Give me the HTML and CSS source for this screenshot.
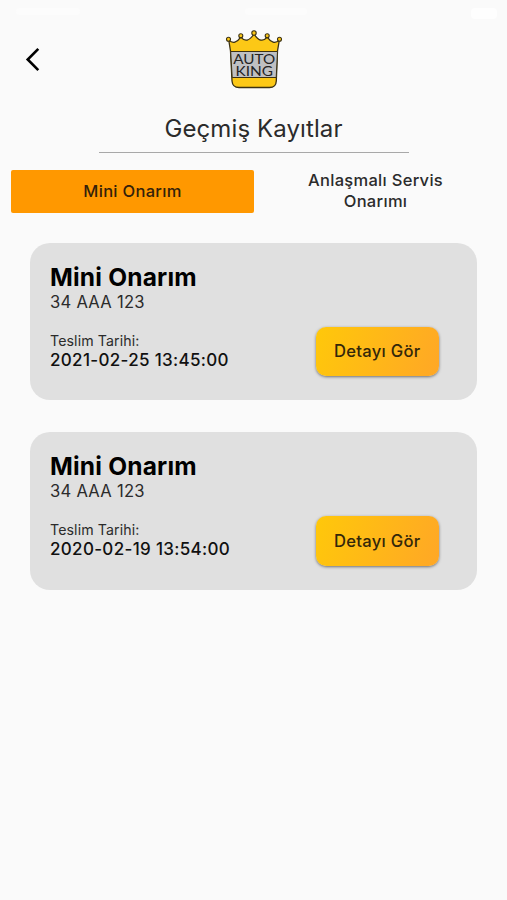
FILE: index.html
```html
<!DOCTYPE html>
<html lang="tr">
<head>
<meta charset="utf-8">
<meta name="viewport" content="width=device-width, initial-scale=1">
<title>Geçmiş Kayıtlar</title>
<link rel="stylesheet" href="styles.css">
</head>
<body>
<div class="status"><span class="status-time"></span><span class="status-notch"></span><span class="status-battery"></span></div>
<header class="topbar">
  <button class="back" aria-label="Geri">
    <svg width="18" height="26" viewBox="0 0 18 26"><path d="M14.300 1.800 3.700 12.500 14.300 23.200" fill="none" stroke="#000" stroke-width="2.6"/></svg>
  </button>
  <svg class="logo" width="80" height="80" viewBox="0 0 80 80">
    <path d="M16.500 31 14.800 20.300Q21 25.500 26.800 17.200Q33 24.500 40 14Q47 24.500 53.200 17.200Q59 25.500 65.300 20.300L63.500 31L62.300 61Q62 67.500 55.500 67.500H25Q18.500 67.500 18 61Z" fill="#fcc816" stroke="#3b3113" stroke-width="1.300"/>
    <path d="M16.700 31.500H63.500L62.200 57.500H18.200Z" fill="#bfc0c2" stroke="#3b3113" stroke-width="1"/>
    <g fill="#fcc816" stroke="#3b3113" stroke-width="1.100"><circle cx="14.500" cy="19.300" r="2"/><circle cx="26.800" cy="15.800" r="2"/><circle cx="40" cy="13" r="2.200"/><circle cx="53.200" cy="15.800" r="2"/><circle cx="65.500" cy="19.300" r="2"/></g>
    <g class="logo-text"><text x="19.300" y="43.900" textLength="42" lengthAdjust="spacingAndGlyphs">AUTO</text><text x="21.500" y="55.800" textLength="37.500" lengthAdjust="spacingAndGlyphs">KING</text></g>
  </svg>
</header>
<h1 class="title"><span>Geçmiş Kayıtlar</span></h1>
<nav class="tabs">
  <button class="tab active">Mini Onarım</button>
  <button class="tab">Anlaşmalı Servis<br>Onarımı</button>
</nav>
<main class="records">
  <article class="card">
    <div class="info">
      <h2 class="name">Mini Onarım</h2>
      <p class="plate">34 AAA 123</p>
      <p class="label">Teslim Tarihi:</p>
      <p class="date">2021-02-25 13:45:00</p>
    </div>
    <button class="detail">Detayı Gör</button>
  </article>
  <article class="card">
    <div class="info">
      <h2 class="name">Mini Onarım</h2>
      <p class="plate">34 AAA 123</p>
      <p class="label">Teslim Tarihi:</p>
      <p class="date">2020-02-19 13:54:00</p>
    </div>
    <button class="detail">Detayı Gör</button>
  </article>
</main>
</body>
</html>
```
FILE: styles.css
```css
* { box-sizing: border-box; margin: 0; padding: 0; }
body { width: 507px; height: 900px; overflow: hidden; background: #fafafa; color: #2b2b2b; font-family: Inter, "Liberation Sans", sans-serif; }
button { border: 0; background: none; font: inherit; color: inherit; }
.status { height: 20px; padding: 8px 10px 0 16px; display: flex; justify-content: space-between; }
.status span { background: #fcfcfc; border-radius: 4px; }
.status-time { width: 64px; height: 7px; }
.status-notch { width: 62px; height: 7px; }
.status .status-battery { width: 26px; height: 11px; background: #fefefe; }
.topbar { height: 80px; display: grid; grid-template-columns: 214px 80px 1fr; }
.back { width: 26px; height: 26px; margin: 27px 0 0 24px; display: flex; }
.logo-text { font-family: Lato, sans-serif; font-size: 14px; fill: #242424; }
.title { width: 310px; height: 53px; margin: 0 auto; padding-top: 14px; border-bottom: 1.5px solid #a8a8a8; text-align: center; font-size: 24px; line-height: 30px; font-weight: 400; letter-spacing: .1px; }
.tabs { display: grid; grid-template-columns: 243px 243px; height: 43.5px; margin: 16.5px 0 0 11px; }
.tab { font-size: 16.5px; line-height: 21px; font-weight: 500; letter-spacing: .3px; border-radius: 2px; }
.active { background: #ff9800; color: #33210a; }
.records { display: grid; gap: 32px; padding: 29.5px 30px 0; }
.card { display: flex; justify-content: space-between; height: 157.5px; padding: 20px 38px 0 20px; border-radius: 20px; background: #e0e0e0; }
.name { color: #000; font-size: 24.5px; line-height: 29px; font-weight: 700; letter-spacing: .2px; }
.plate { font-size: 16.6px; line-height: 20px; letter-spacing: .25px; }
.label { margin-top: 20.2px; font-size: 14.2px; line-height: 18px; letter-spacing: .1px; }
.date { color: #111; font-size: 17px; line-height: 20px; font-weight: 500; letter-spacing: .32px; }
.detail { width: 123.5px; height: 49.5px; margin-top: 64px; border-radius: 10px; background: linear-gradient(110deg, #ffc80a, #ffa726); box-shadow: 0 1px 3px rgba(0,0,0,.5); color: #33270a; font-size: 16.6px; font-weight: 500; letter-spacing: .3px; }
```
